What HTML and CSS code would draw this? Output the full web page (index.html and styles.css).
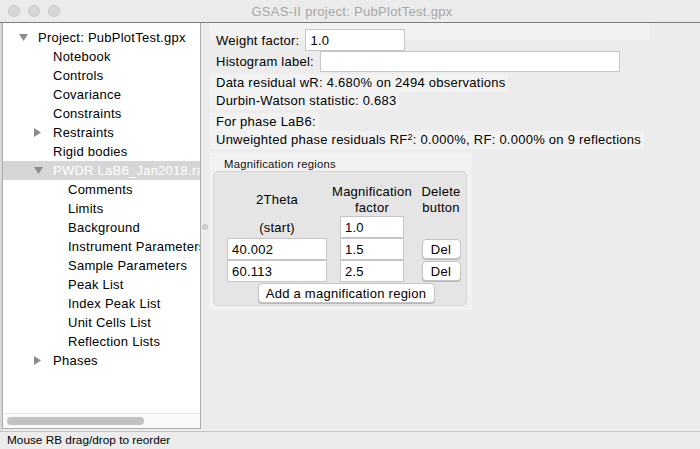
FILE: index.html
```html
<!DOCTYPE html>
<html>
<head>
<meta charset="utf-8">
<title>GSAS-II project: PubPlotTest.gpx</title>
<link rel="stylesheet" href="styles.css">
</head>
<body>
<div class="window">
  <header class="titlebar">
    <div class="lights"><span class="light"></span><span class="light"></span><span class="light"></span></div>
    <div class="title">GSAS-II project: PubPlotTest.gpx</div>
    <div></div>
  </header>
  <div class="main">
    <div class="gutter"></div>
    <div class="tree">
      <ul class="tree-list">
        <li class="node l0"><span class="tog"><svg width="9" height="7" viewBox="0 0 9 7"><path d="M0 0H9L4.5 7Z" fill="#8c8c8c"/></svg></span><span class="label">Project: PubPlotTest.gpx</span></li>
        <li class="node l1"><span class="tog"></span><span class="label">Notebook</span></li>
        <li class="node l1"><span class="tog"></span><span class="label">Controls</span></li>
        <li class="node l1"><span class="tog"></span><span class="label">Covariance</span></li>
        <li class="node l1"><span class="tog"></span><span class="label">Constraints</span></li>
        <li class="node l1"><span class="tog"><svg width="7" height="9" viewBox="0 0 7 9"><path d="M0 0L7 4.5L0 9Z" fill="#8c8c8c"/></svg></span><span class="label">Restraints</span></li>
        <li class="node l1"><span class="tog"></span><span class="label">Rigid bodies</span></li>
        <li class="node l1 sel"><span class="tog"><svg width="9" height="7" viewBox="0 0 9 7"><path d="M0 0H9L4.5 7Z" fill="#8c8c8c"/></svg></span><span class="label">PWDR LaB6_Jan2018.raw</span></li>
        <li class="node l2"><span class="tog"></span><span class="label">Comments</span></li>
        <li class="node l2"><span class="tog"></span><span class="label">Limits</span></li>
        <li class="node l2"><span class="tog"></span><span class="label">Background</span></li>
        <li class="node l2"><span class="tog"></span><span class="label">Instrument Parameters</span></li>
        <li class="node l2"><span class="tog"></span><span class="label">Sample Parameters</span></li>
        <li class="node l2"><span class="tog"></span><span class="label">Peak List</span></li>
        <li class="node l2"><span class="tog"></span><span class="label">Index Peak List</span></li>
        <li class="node l2"><span class="tog"></span><span class="label">Unit Cells List</span></li>
        <li class="node l2"><span class="tog"></span><span class="label">Reflection Lists</span></li>
        <li class="node l1"><span class="tog"><svg width="7" height="9" viewBox="0 0 7 9"><path d="M0 0L7 4.5L0 9Z" fill="#8c8c8c"/></svg></span><span class="label">Phases</span></li>
      </ul>
      <div class="hscroll"><div class="thumb"></div></div>
    </div>
    <div class="sash"><span class="sash-dot"></span></div>
    <div class="content">
      <div class="field f-weight"><span class="flabel">Weight factor:</span><div class="input in-weight">1.0</div></div>
      <div class="field f-hist"><span class="flabel">Histogram label:</span><div class="input in-hist"></div></div>
      <div class="stat s-first">Data residual wR: 4.680% on 2494 observations</div>
      <div class="stat">Durbin-Watson statistic: 0.683</div>
      <div class="stat s-gap">For phase LaB6:</div>
      <div class="stat">Unweighted phase residuals RF<sup>2</sup>: 0.000%, RF: 0.000% on 9 reflections</div>
      <div class="magpanel">
        <div class="magtitle">Magnification regions</div>
        <div class="magbox">
          <div class="maggrid">
            <div class="hdr">2Theta</div>
            <div class="hdr">Magnification<br>factor</div>
            <div class="hdr">Delete<br>button</div>

            <div class="cell-text">(start)</div>
            <div class="input in-mag">1.0</div>
            <div></div>

            <div class="input in-theta">40.002</div>
            <div class="input in-mag">1.5</div>
            <button class="btn btn-del">Del</button>

            <div class="input in-theta">60.113</div>
            <div class="input in-mag">2.5</div>
            <button class="btn btn-del">Del</button>

            <button class="btn btn-add">Add a magnification region</button>
          </div>
        </div>
      </div>
    </div>
  </div>
  <footer class="status">Mouse RB drag/drop to reorder</footer>
</div>
</body>
</html>
```
FILE: styles.css
```css
* { box-sizing: border-box; margin: 0; padding: 0; }
html, body { width: 700px; height: 449px; overflow: hidden; }
body {
  background: #ececec;
  font-family: "Liberation Sans", Arial, sans-serif;
  font-size: 13px;
  letter-spacing: 0.25px;
  color: #000;
}
.window { display: flex; flex-direction: column; height: 449px; }

/* title bar */
.titlebar {
  height: 23px;
  flex: none;
  display: grid;
  grid-template-columns: 1fr auto 1fr;
  align-items: center;
  background: #ebebeb;
  border-bottom: 1px solid #7d7d7d;
}
.lights { display: flex; gap: 8px; padding-left: 8px; }
.light {
  width: 12px; height: 12px; border-radius: 50%;
  background: #d6d6d6; border: 1px solid #c7c7c7;
}
.title { color: #a6a6a6; font-size: 13px; letter-spacing: 0.3px; padding-left: 4px; }

/* main */
.main { flex: 1; display: flex; min-height: 0; }
.gutter { width: 2px; flex: none; background: #d9d9d9; }

.tree {
  width: 199px; flex: none;
  background: #fff;
  border: 1px solid #acacac; border-top: none;
  margin-bottom: 2px;
  display: flex; flex-direction: column;
  overflow: hidden;
}
.tree-list { flex: 1; list-style: none; padding-top: 5px; overflow: hidden; }
.node { height: 19px; display: flex; align-items: center; white-space: nowrap; }
.l0 { padding-left: 16px; }
.l1 { padding-left: 31px; }
.l2 { padding-left: 46px; }
.tog { width: 19px; flex: none; display: flex; align-items: center; }
.tog svg { display: block; }
.sel { background: #d6d6d6; color: #fff; }

.hscroll {
  height: 15px; flex: none;
  border-top: 1px solid #e6e6e6;
  background: #fafafa;
  padding: 3px 0 0 4px;
}
.thumb { width: 137px; height: 8px; border-radius: 4px; background: #c2c2c2; }

.sash { width: 9px; flex: none; display: flex; align-items: center; padding-left: 1px; }
.sash-dot {
  width: 6px; height: 6px; border-radius: 50%;
  background: #d4d4d4; border: 1px solid #bdbdbd;
}

/* content */
.content {
  flex: 1;
  padding-top: 6px;
  display: flex; flex-direction: column; align-items: flex-start;
  background-image: linear-gradient(#f2f2f2, #f2f2f2);
  background-size: 440px 17px;
  background-repeat: no-repeat;
}
.field { display: flex; align-items: center; gap: 6px; padding-left: 6px; }
.f-weight { height: 22px; }
.f-hist { height: 21px; }
.input {
  background: #fff;
  border: 1px solid #c6c6c6;
  height: 22px;
  padding: 0 4px;
  display: flex; align-items: center;
  white-space: nowrap;
}
.in-weight { width: 100px; }
.in-hist { width: 300px; height: 21px; }

.stat {
  line-height: 18px;
  padding: 0 3px 0 6px;
  background: #f2f2f2;
  white-space: nowrap;
}
.stat sup { font-size: 9px; vertical-align: 4px; line-height: 0; }
.s-first { margin-top: 2px; }
.s-gap { margin-top: 3px; }

/* magnification */
.magpanel {
  margin-top: 4px;
  width: 262px;
  background: #f2f2f2;
  padding: 0 5px 4px 3px;
}
.magtitle { font-size: 11.3px; line-height: 14px; padding: 4px 0 0 11px; color: #111; }
.magbox {
  height: 135px;
  background: #e5e5e5;
  border: 1px solid #d5d5d5;
  border-radius: 5px;
  padding: 12px 0 0 13px;
}
.maggrid {
  display: grid;
  grid-template-columns: 100px 80px 48px;
  grid-template-rows: 32px 22px 22px 22px auto;
  column-gap: 5px;
}
.hdr { text-align: center; line-height: 16px; align-self: center; }
.cell-text { text-align: center; align-self: center; }
.in-theta { width: 100px; }
.in-mag { width: 64px; justify-self: center; }
.btn {
  font-family: inherit; font-size: 13px; letter-spacing: inherit; color: #000;
  background: #fff;
  border: 1px solid #c4c4c4;
  border-radius: 4px;
  box-shadow: 0 1px 0 #b9b9b9;
  height: 20px;
}
.btn-del { width: 39px; justify-self: center; align-self: center; }
.btn-add { grid-column: 1 / -1; justify-self: center; width: 177px; margin-top: 1px; }

/* status */
.status {
  height: 18px; flex: none;
  border-top: 1px solid #c4c4c4;
  padding-left: 7px;
  line-height: 17px;
  font-size: 11.8px;
  letter-spacing: 0;
  background: #ececec;
  white-space: nowrap;
}
```
